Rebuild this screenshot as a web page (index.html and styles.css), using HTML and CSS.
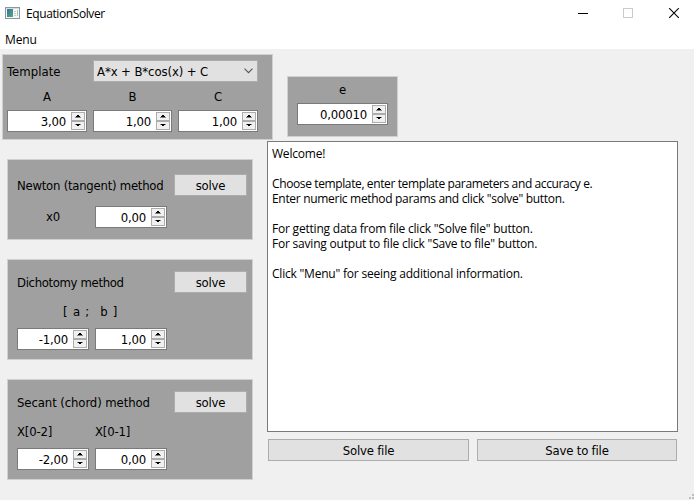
FILE: index.html
```html
<!DOCTYPE html>
<html lang="en">
<head>
<meta charset="utf-8">
<title>EquationSolver</title>
<link rel="stylesheet" href="styles.css">
</head>
<body>
<svg class="defs" aria-hidden="true">
  <symbol id="steps" viewBox="0 0 14 18">
    <rect x=".5" y=".5" width="13" height="8" fill="#f0f0f0" stroke="#acacac"/>
    <rect x=".5" y="9.5" width="13" height="8" fill="#f0f0f0" stroke="#acacac"/>
    <path d="M6 3h2v1h1v1H5V4h1zM5 12h4v1H8v1H6v-1H5z" fill="#000" shape-rendering="crispEdges"/>
    <path d="M4 5h6v1H4zM4 12h6v1H4z" fill="#000" fill-opacity=".45"/>
  </symbol>
</svg>
<header class="titlebar">
  <svg class="appicon" width="15" height="12" viewBox="0 0 15 12">
    <defs><linearGradient id="g" x1="0" y1="0" x2="1" y2="1"><stop offset="0" stop-color="#3f6fa0"/><stop offset="1" stop-color="#4eae78"/></linearGradient></defs>
    <rect x=".5" y=".5" width="14" height="11" fill="#f4f6f7" stroke="#8d979e"/>
    <path d="M1 1.5h13" stroke="#d5dde2"/>
    <rect x="2" y="2" width="6" height="8" fill="url(#g)"/>
    <path d="M9 4.500h2M9 6.500h2M9 8.500h2" stroke="#c5cbd0"/>
    <path d="M12.500 3v6" stroke="#a9c7b6"/>
  </svg>
  <span class="title">EquationSolver</span>
  <svg class="controls" width="102" height="11" viewBox="0 0 102 11" fill="none">
    <path d="M0 5.500h10" stroke="#000"/>
    <rect x="45.500" y=".5" width="9" height="9" stroke="#ccc"/>
    <path d="M91.200.2l9.600 9.600M100.800.2l-9.600 9.600" stroke="#000" stroke-width="1.100"/>
  </svg>
</header>
<nav class="menubar"><span>Menu</span></nav>
<main>
  <div class="top">
    <section class="panel template">
      <div class="row pick">
        <span class="t-template">Template</span>
        <div class="combo"><span class="t-formula">A*x + B*cos(x) + C</span>
          <svg width="9" height="6" viewBox="0 0 9 6"><path d="M.5.7l4 4 4-4" fill="none" stroke="#555" stroke-width="1.100"/></svg>
        </div>
      </div>
      <div class="params">
        <span>A</span><span>B</span><span>C</span>
        <div class="spin"><span>3,00</span><svg><use href="#steps"/></svg></div>
        <div class="spin"><span>1,00</span><svg><use href="#steps"/></svg></div>
        <div class="spin"><span>1,00</span><svg><use href="#steps"/></svg></div>
      </div>
    </section>
    <section class="panel accuracy">
      <span>e</span>
      <div class="spin"><span>0,00010</span><svg><use href="#steps"/></svg></div>
    </section>
  </div>
  <div class="work">
    <div class="methods">
      <section class="panel newton">
        <div class="row head"><span class="t-newton">Newton (tangent) method</span><button>solve</button></div>
        <div class="pair"><span class="x0">x0</span><div class="spin"><span>0,00</span><svg><use href="#steps"/></svg></div></div>
      </section>
      <section class="panel">
        <div class="row head"><span class="t-dich">Dichotomy method</span><button>solve</button></div>
        <div class="interval">[ a ;&nbsp; b ]</div>
        <div class="pair">
          <div class="spin"><span>-1,00</span><svg><use href="#steps"/></svg></div>
          <div class="spin"><span>1,00</span><svg><use href="#steps"/></svg></div>
        </div>
      </section>
      <section class="panel">
        <div class="row head"><span class="t-secant">Secant (chord) method</span><button>solve</button></div>
        <div class="pair names"><span>X[0-2]</span><span>X[0-1]</span></div>
        <div class="pair">
          <div class="spin"><span>-2,00</span><svg><use href="#steps"/></svg></div>
          <div class="spin"><span>0,00</span><svg><use href="#steps"/></svg></div>
        </div>
      </section>
    </div>
    <div class="output">
      <div class="log">
        <p>Welcome!</p>
        <p><span class="l1">Choose template, enter template parameters and accuracy e.</span><br><span class="l2">Enter numeric method params and click "solve" button.</span></p>
        <p>For getting data from file click "Solve file" button.<br>For saving output to file click "Save to file" button.</p>
        <p>Click "Menu" for seeing additional information.</p>
      </div>
      <div class="actions"><button>Solve file</button><button>Save to file</button></div>
    </div>
  </div>
</main>
<svg class="grip" width="5" height="5" viewBox="0 0 5 5"><path d="M3 0h2v2H3zM0 3h2v2H0zM3 3h2v2H3z" fill="#bfbfbf"/></svg>
</body>
</html>
```
FILE: styles.css
```css
* { box-sizing: border-box; }
body {
  margin: 0;
  width: 694px;
  height: 500px;
  overflow: hidden;
  background: #f0f0f0;
  color: #000;
  font: 13px/16px "DejaVu Sans Condensed", "DejaVu Sans", sans-serif;
  font-stretch: condensed;
  letter-spacing: -0.2px;
  white-space: nowrap;
}
.defs { display: none; }
.titlebar, .menubar, .log {
  font-family: "Open Sans", "Noto Sans", sans-serif;
  font-size: 12px;
  font-stretch: normal;
  letter-spacing: -0.1px;
}
.titlebar {
  display: flex;
  height: 28px;
  padding: 7px 14px 0 5px;
  background: #fff;
}
.title { margin: -1px auto 0 6px; letter-spacing: -0.4px; }
.controls { margin-top: 1px; }
.menubar { height: 21px; padding: 4px 5px 0; background: #fff; }
.top { display: flex; height: 92px; padding: 5px 0 0 2px; gap: 14px; }
.panel { background: #a0a0a0; border: 1px solid #d0d0d0; }
.row { display: flex; align-items: center; justify-content: space-between; }
.row > span { padding-top: 1px; }
.template { width: 271px; height: 86px; padding: 5px 14px 0 4px; }
.t-template { letter-spacing: 0.05px; }
.t-formula { letter-spacing: -0.1px; padding-top: 1px; }
.t-newton { letter-spacing: -0.25px; }
.t-dich { letter-spacing: -0.35px; }
.t-secant { letter-spacing: -0.1px; }
.combo {
  display: flex;
  align-items: center;
  justify-content: space-between;
  width: 165px;
  height: 22px;
  padding: 0 4px 0 3px;
  background: #e1e1e1;
  border: 1px solid #adadad;
}
.params { display: grid; grid-template-columns: 80px 79px 80px; column-gap: 6px; justify-items: stretch; }
.params > span { height: 28px; padding-top: 7px; text-align: center; }
.spin {
  display: flex;
  align-items: center;
  justify-content: flex-end;
  gap: 5px;
  height: 22px;
  padding-right: 1px;
  background: #fff;
  border: 1px solid #7a7a7a;
}
.spin svg { width: 14px; height: 18px; }
.spin span { padding-top: 1px; }
.accuracy { width: 111px; height: 61px; margin-top: 22px; padding: 5px 9px 0; text-align: center; }
.accuracy .spin { margin-top: 5px; }
.accuracy > span { display: block; }
.work { display: flex; gap: 14px; padding-left: 7px; }
.methods { display: flex; flex-direction: column; gap: 19px; width: 246px; padding-top: 18px; }
.methods .panel { height: 101px; padding: 11px 5px 0 9px; }
.methods .newton { height: 81px; padding-top: 14px; }
button {
  width: 73px;
  height: 22px;
  padding: 1px 0 0;
  background: #e1e1e1;
  border: 1px solid #adadad;
  color: inherit;
  font: inherit;
  font-stretch: condensed;
  letter-spacing: inherit;
}
.pair { display: grid; grid-template-columns: 72px 72px; gap: 6px; }
.newton .pair { margin-top: 10px; align-items: center; }
.x0 { text-align: center; }
.interval { height: 35px; padding: 11px 0 0 46px; word-spacing: 2px; }
.names { height: 35px; padding-top: 11px; }
.output { width: 411px; }
.log {
  height: 291px;
  padding: 4px;
  background: #fff;
  border: 1px solid #7a7a7a;
  line-height: 15px;
  letter-spacing: -0.21px;
}
.log .l1 { letter-spacing: -0.38px; }
.log .l2 { letter-spacing: -0.31px; }
.log p { margin: 0 0 15px; }
.actions { display: grid; grid-template-columns: 201px 200px; gap: 8px; padding: 7px 1px 0; }
.actions button { width: 100%; }
.grip { position: absolute; right: 0; bottom: 1px; }
```
